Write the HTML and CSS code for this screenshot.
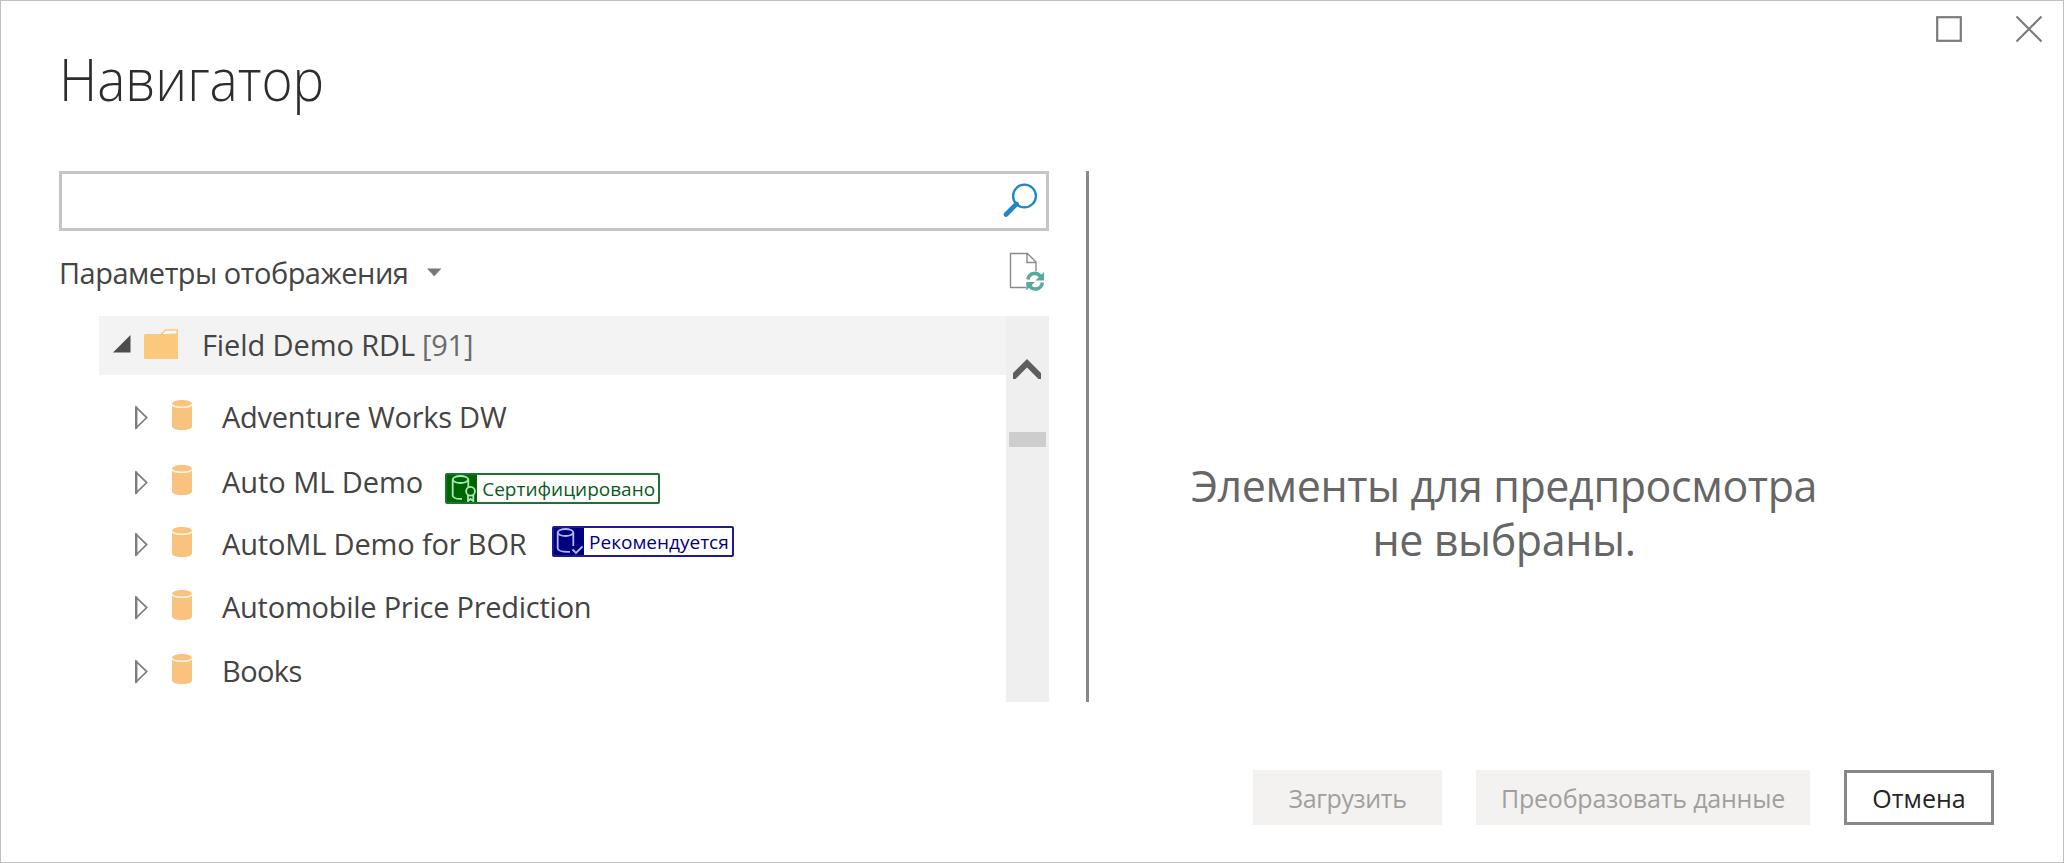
FILE: index.html
```html
<!DOCTYPE html>
<html lang="ru">
<head>
<meta charset="utf-8">
<title>Навигатор</title>
<link rel="stylesheet" href="styles.css">
</head>
<body>
<svg class="defs" width="0" height="0">
  <symbol id="expander" viewBox="0 0 16 26"><path d="M3.200 3.500V23.800L13.700 13.600Z" fill="#fff" stroke="#7d7d7d" stroke-width="1.700"/><path d="M3.200 2.500V24.800" stroke="#7d7d7d" stroke-width="2.400"/></symbol>
  <symbol id="database" viewBox="0 0 20 30"><path d="M0 4C0-1.200 20-1.200 20 4V26.400C20 31.200 0 31.200 0 26.400Z" fill="#f8c37e"/><path d="M0 4.300C1 8.300 19 8.300 20 4.300" fill="none" stroke="#fff3e2" stroke-width="1.500"/></symbol>
</svg>
<div class="dialog">
  <header class="header">
    <h1 class="title">Навигатор</h1>
    <div class="window-controls">
      <svg width="26" height="26" viewBox="0 0 26 26"><rect x="1.200" y="1.200" width="23.600" height="23.600" fill="none" stroke="#7b7b7b" stroke-width="2.200"/></svg>
      <svg class="close" width="28" height="28" viewBox="0 0 28 28"><path d="M1.500 1.500L26.500 26.500M26.500 1.500L1.500 26.500" fill="none" stroke="#7b7b7b" stroke-width="2.200"/></svg>
    </div>
  </header>
  <main class="content">
    <section class="browser">
      <div class="search">
        <svg width="36" height="36" viewBox="0 0 36 36"><circle cx="22.500" cy="13" r="11.400" fill="none" stroke="#2086c5" stroke-width="2.300"/><path d="M14.500 21L4 31.500" stroke="#2086c5" stroke-width="4.600" stroke-linecap="round"/></svg>
      </div>
      <div class="options">
        <span class="options-label">Параметры отображения</span>
        <svg class="caret" width="15" height="9" viewBox="0 0 15 9"><path d="M0 .5H14.500L7.200 8.200Z" fill="#777"/></svg>
        <svg class="refresh" width="36" height="40" viewBox="0 0 36 40"><path d="M17 35.500H1.500V1.500H18.500L27 10V19M18 1.500V10.500H27" fill="none" stroke="#8a8a8a" stroke-width="1.400"/><g fill="none" stroke="#57ab9a" stroke-width="3.600"><path d="M18.800 27.500C20.500 20.500 28 19.500 31.500 24.500"/><path d="M33.500 30.500C32 38 24 39 20.500 33.500"/></g><path d="M35 20V28.500H26.500Z M17.300 38.500V30H26Z" fill="#57ab9a"/></svg>
      </div>
      <div class="tree">
        <div class="items">
          <div class="folder">
            <svg class="collapse" width="18" height="18" viewBox="0 0 18 18"><path d="M0 17.500L17.500 0V17.500Z" fill="#4d4d4d"/></svg>
            <svg class="folder-icon" width="34" height="31" viewBox="0 0 34 31"><path d="M16.500 6L21.500 1H33.200V10" fill="#fff" stroke="#fbc97c" stroke-width="1.600"/><path d="M0 6.500Q0 5 1.500 5H24L26 4.500H34V30H1.500Q0 30 0 28.500Z" fill="#fbc97c"/></svg>
            <span class="folder-name">Field Demo RDL</span><span class="count">[91]</span>
          </div>
          <div class="item i1"><svg class="expander"><use href="#expander"/></svg><svg class="database"><use href="#database"/></svg><span>Adventure Works DW</span></div>
          <div class="item i2"><svg class="expander"><use href="#expander"/></svg><svg class="database"><use href="#database"/></svg><span>Auto ML Demo</span>
            <div class="badge certified">
              <svg width="30" height="27" viewBox="0 0 30 27"><g fill="none" stroke="#a9eab9" stroke-width="1.800"><ellipse cx="13.500" cy="4.500" rx="7.800" ry="3.500"/><path d="M5.700 4.500V20.500C6 23.500 11 24 15 23.800M21.300 4.500V12"/><circle cx="23.500" cy="16.300" r="4.400"/><path d="M21 20V26L23.500 24L26.300 26V20"/></g></svg>
              <span>Сертифицировано</span>
            </div>
          </div>
          <div class="item i3"><svg class="expander"><use href="#expander"/></svg><svg class="database"><use href="#database"/></svg><span>AutoML Demo for BOR</span>
            <div class="badge promoted">
              <svg width="30" height="27" viewBox="0 0 30 27"><g fill="none" stroke="#b4b8f0" stroke-width="1.800"><ellipse cx="11.500" cy="4.500" rx="7.800" ry="3.500"/><path d="M3.700 4.500V20.500C4 23.500 9 24 16 23.800M19.300 4.500V18"/><path d="M18.500 21.500L22 25L28.500 18.500"/></g></svg>
              <span>Рекомендуется</span>
            </div>
          </div>
          <div class="item i4"><svg class="expander"><use href="#expander"/></svg><svg class="database"><use href="#database"/></svg><span>Automobile Price Prediction</span></div>
          <div class="item i5"><svg class="expander"><use href="#expander"/></svg><svg class="database"><use href="#database"/></svg><span>Books</span></div>
        </div>
        <div class="scrollbar">
          <svg width="28" height="20" viewBox="0 0 28 20"><path d="M0 14L14 0L28 14V20H25.500L14 8.500L2.500 20H0Z" fill="#5e5e5e"/></svg>
          <div class="thumb"></div>
        </div>
      </div>
    </section>
    <section class="preview">
      <p class="message">Элементы для предпросмотра<br>не выбраны.</p>
    </section>
  </main>
  <footer class="footer">
    <button class="button load" disabled>Загрузить</button>
    <button class="button transform" disabled>Преобразовать данные</button>
    <button class="button cancel">Отмена</button>
  </footer>
</div>
</body>
</html>
```
FILE: styles.css
```css
* { box-sizing: border-box; }
body { margin: 0; font-family: "Open Sans", "Noto Sans", sans-serif; background: #fff; }
.defs { position: absolute; }
svg { display: block; flex: none; }
span { white-space: nowrap; }
.dialog { display: flex; flex-direction: column; width: 2064px; height: 863px; border: 1px solid #bfbfbf; background: #fff; }
.header { display: flex; justify-content: space-between; height: 170px; padding: 15px 20px 0 58px; }
.title { margin: 22px 0 0; font-size: 59px; line-height: 80px; font-weight: 300; color: #2d2d2d; transform: scaleX(.9); transform-origin: left; }
.window-controls { display: flex; gap: 53px; }
.close { margin-top: -1px; }
.content { display: flex; height: 531px; padding-left: 58px; }
.browser { width: 990px; }
.search { display: flex; align-items: center; justify-content: flex-end; height: 60px; border: 3px solid #c5c5c5; padding-right: 8px; }
.options { display: flex; align-items: center; height: 85px; padding-bottom: 3px; color: #444; font-size: 29px; letter-spacing: -.5px; }
.options-label { width: 349px; }
.caret { margin-left: 19px; }
.refresh { margin-left: auto; margin-right: 4px; }
.tree { display: flex; height: 386px; padding-left: 40px; }
.items { flex: 1; font-size: 29px; line-height: 44px; letter-spacing: -.25px; color: #444; }
.folder { display: flex; align-items: center; height: 59px; padding: 0 0 1px 14px; background: #f3f3f3; }
.collapse { margin-bottom: 2px; }
.folder-icon { margin: 0 24px 2px 13px; }
.folder-name { width: 220px; letter-spacing: -.1px; }
.count { color: #6b6b6b; }
.item { display: flex; align-items: center; height: 44px; padding-left: 34px; }
.i1 { margin-top: 20px; }
.i2 { margin-top: 21px; letter-spacing: -.05px; }
.i3 { margin-top: 18px; letter-spacing: -.16px; }
.i4 { margin-top: 19px; }
.i5 { margin-top: 20px; letter-spacing: -.6px; }
.expander { width: 16px; height: 26px; }
.database { width: 20px; height: 30px; margin: 0 30px 4px 23px; }
.badge { display: flex; align-items: center; height: 31px; border: 2px solid; border-radius: 2px; font-size: 19px; line-height: 27px; letter-spacing: 0; }
.badge svg { height: 27px; }
.badge span { padding-top: 2px; }
.certified { width: 215px; margin: 13px 0 0 22px; color: #0b5a1d; border-color: #1a7330; }
.certified svg { background: #006400; margin-right: 5px; }
.promoted { width: 182px; margin: -5px 0 0 25.500px; color: #00007f; border-color: #1c1c8c; }
.promoted svg { background: #00007f; margin-right: 5px; }
.scrollbar { display: flex; flex-direction: column; align-items: center; width: 43px; padding-top: 43px; background: #efefef; }
.scrollbar svg { margin-right: 1px; }
.thumb { width: 37px; height: 15px; margin-top: 53px; background: #cdcdcd; }
.preview { flex: 1; margin-left: 37px; border-left: 3px solid #8a8886; }
.message { width: 830px; margin: 288px 0 0; text-align: center; font-size: 43px; line-height: 54px; letter-spacing: -.4px; color: #666; }
.footer { display: flex; justify-content: flex-end; gap: 34px; padding: 68px 69px 0 0; }
.button { height: 55px; padding: 0; border: 0; background: #f3f2f1; color: #a19f9d; font: 25px "Open Sans", "Noto Sans", sans-serif; }
.load { width: 189px; letter-spacing: -.4px; }
.transform { width: 334px; letter-spacing: -.2px; }
.cancel { width: 150px; border: 3px solid #8a8886; background: #fff; color: #252428; }
```
